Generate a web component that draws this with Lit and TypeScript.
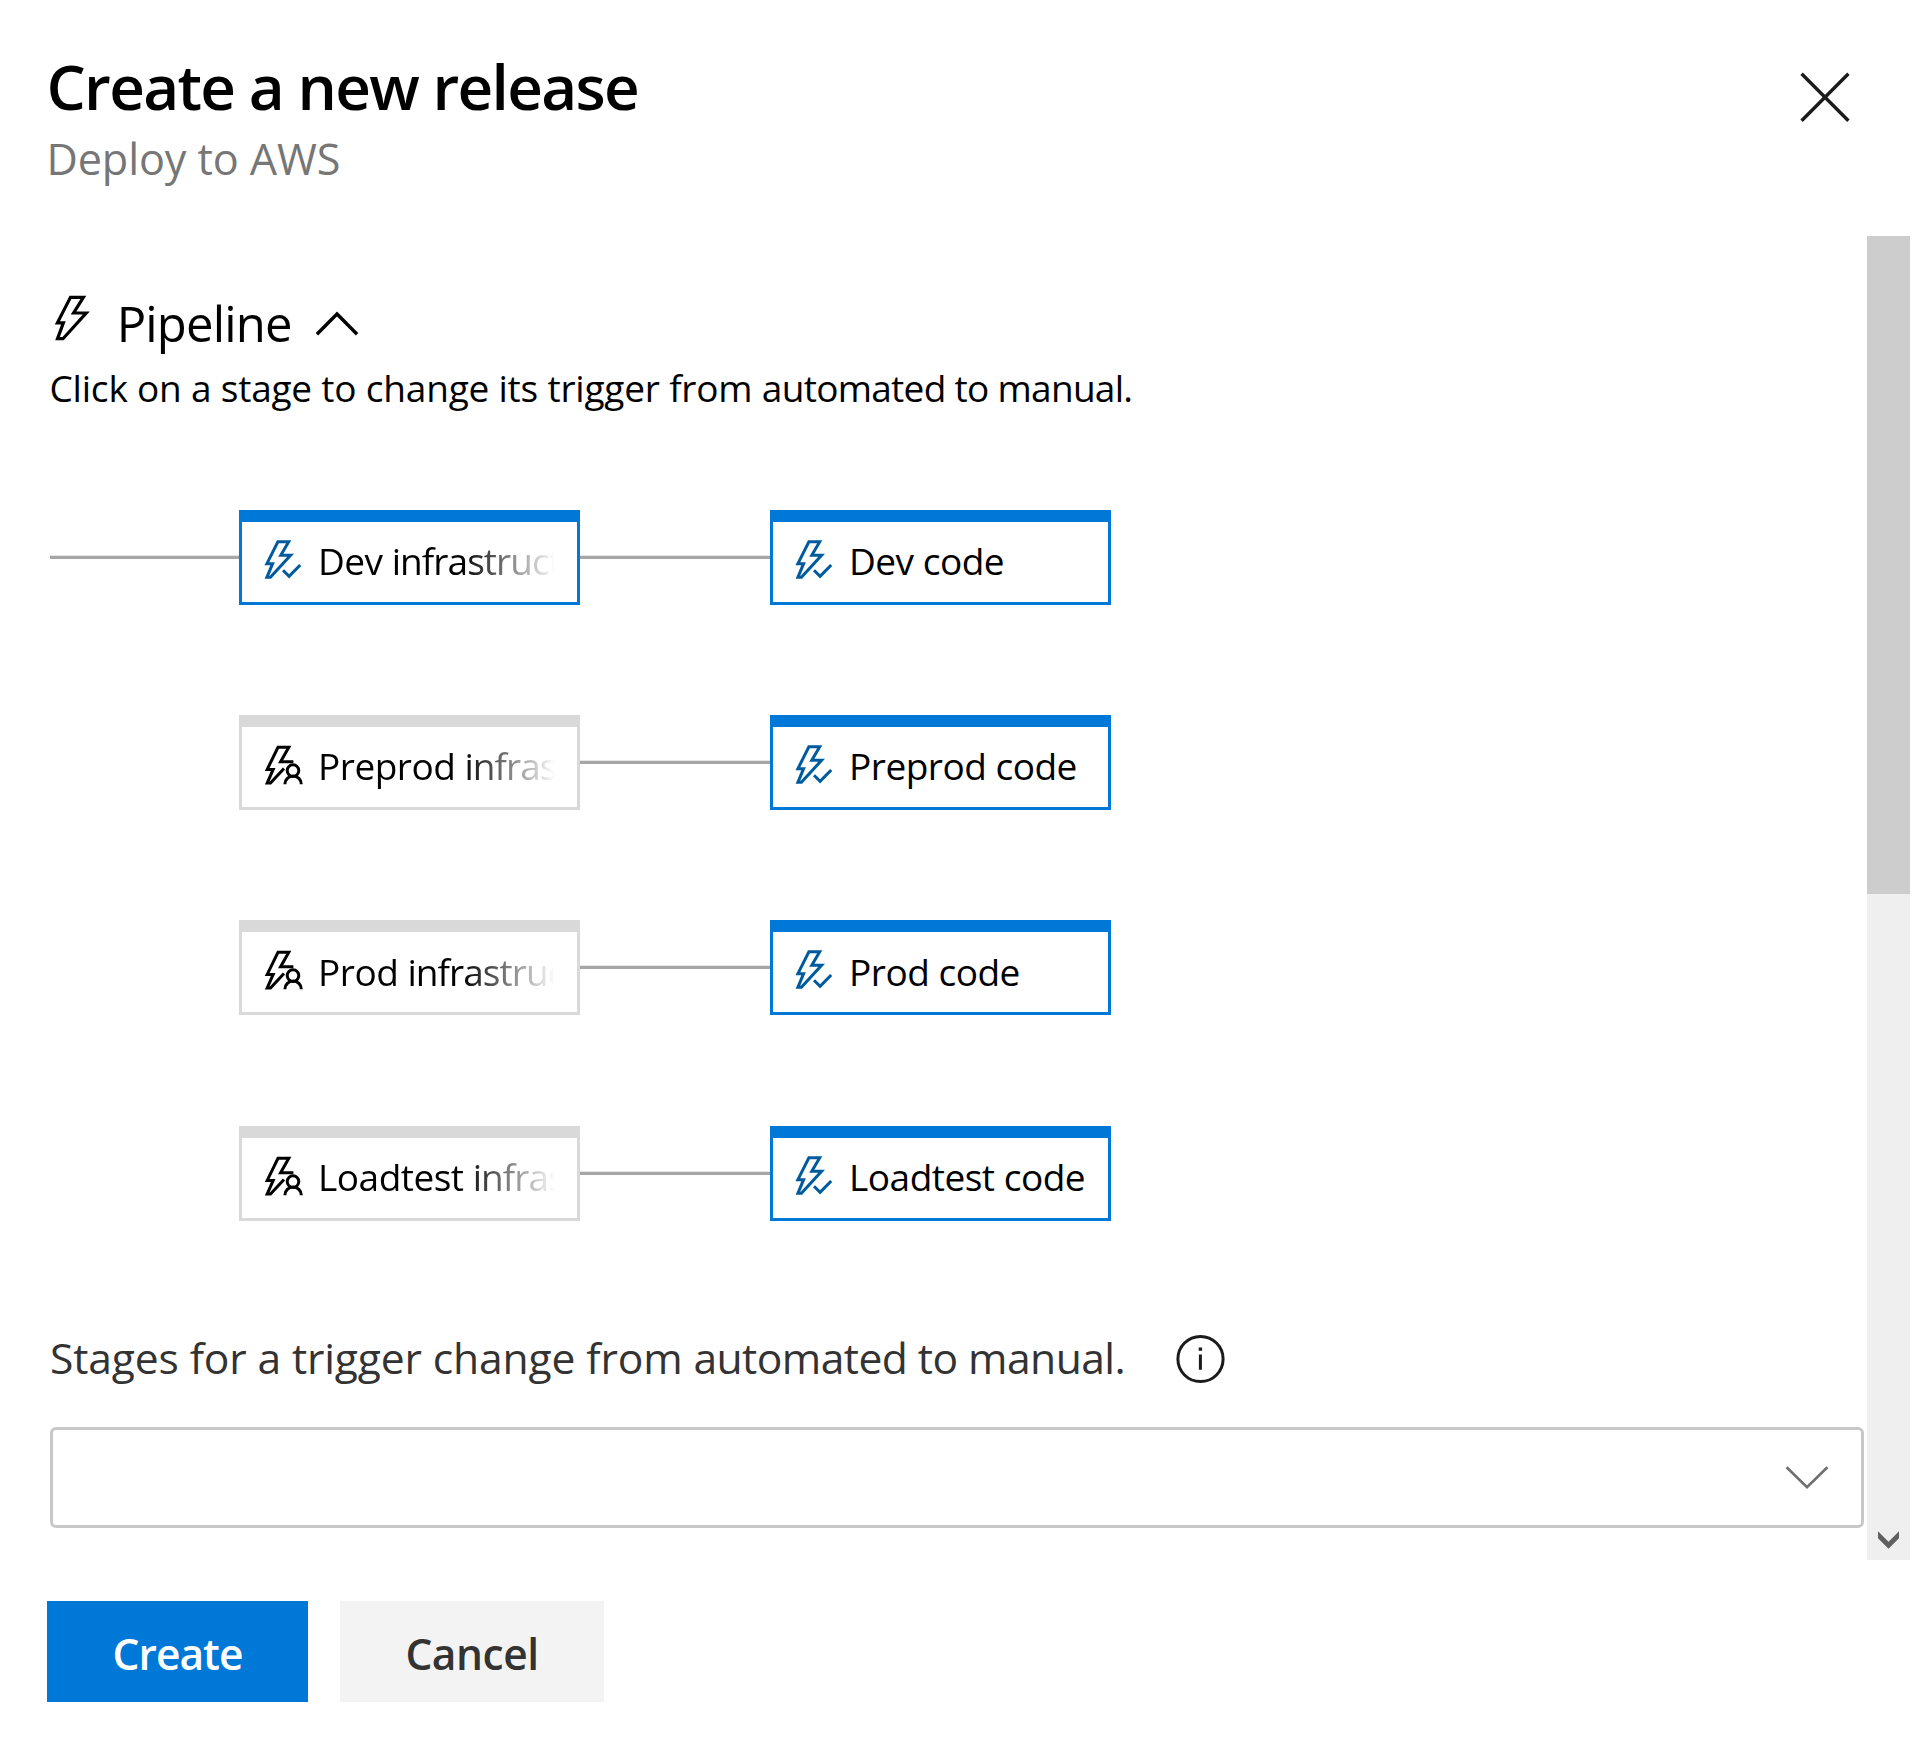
import { LitElement, html, css, svg } from "lit";
import { customElement, property } from "lit/decorators.js";
import { classMap } from "lit/directives/class-map.js";

interface Stage {
  name: string;
  kind: string;
  manual?: boolean;
}

interface PipelineRow {
  linked: boolean;
  stages: [Stage, Stage];
}

const pair = (name: string, manual: boolean): [Stage, Stage] => [
  { name, kind: "infrastructure", manual },
  { name, kind: "code" },
];

const ROWS: PipelineRow[] = [
  { linked: true, stages: pair("Dev", false) },
  { linked: false, stages: pair("Preprod", true) },
  { linked: false, stages: pair("Prod", true) },
  { linked: false, stages: pair("Loadtest", true) },
];

@customElement("stage-card")
class StageCard extends LitElement {
  @property() name = "";
  @property() kind = "";
  @property({ type: Boolean }) manual = false;

  static styles = css`
    :host {
      display: block;
      width: 341px;
      height: 94.9px;
    }
    .card {
      box-sizing: border-box;
      height: 100%;
      display: flex;
      align-items: flex-start;
      border: 3px solid #0078d7;
      border-top-width: 12px;
      background: #fff;
      padding-left: 22px;
    }
    .card.manual {
      border-color: #d9d9d9;
    }
    .icon {
      flex: none;
      width: 40px;
      height: 41px;
      margin-top: 18px;
      fill: none;
      stroke: #005a9e;
      stroke-width: 3;
    }
    .manual .icon {
      stroke: #000;
    }
    .name {
      width: 237px;
      margin: 14.4px 0 0 14px;
      overflow: hidden;
      white-space: nowrap;
      font-size: 37px;
      line-height: 50px;
      letter-spacing: -0.5px;
      color: #000;
    }
    .name.fade {
      -webkit-mask-image: linear-gradient(to right, #000 61%, transparent 100%);
      mask-image: linear-gradient(to right, #000 61%, transparent 100%);
    }
    .fade .kind {
      letter-spacing: -0.95px;
    }
  `;

  render() {
    const glyph = this.manual
      ? svg`<path d="M29.4 16.7H16.6L24.8 2.3H14L3.2 24.4H9.2L3.2 38H6.5L20 23.4"/>
            <circle cx="29" cy="25.6" r="5.8"/>
            <path d="M20.9 39.2A8.2 8.2 0 0 1 37.3 39.2"/>`
      : svg`<path d="M13.9 1.8H24.7L16.8 15.3H26.6L6.4 37.3H2.9L8.6 23.7H2.9Z"/>
            <path d="M19 30.2L25.1 36.3L36.2 25"/>`;
    const fade = this.kind === "infrastructure";
    return html`
      <div class=${classMap({ card: true, manual: this.manual })}>
        <svg class="icon" viewBox="0 0 40 41">${glyph}</svg>
        <div class=${classMap({ name: true, fade })}>${this.name} <span class="kind">${this.kind}</span></div>
      </div>
    `;
  }
}

@customElement("app-root")
class AppRoot extends LitElement {
  static styles = css`
    :host {
      display: flex;
      flex-direction: column;
      box-sizing: border-box;
      width: 1931px;
      height: 1742px;
      overflow: hidden;
      background: #fff;
      color: #000;
      font-family: "Open Sans", "Noto Sans", sans-serif;
    }
    svg {
      display: block;
      flex: none;
      fill: none;
    }
    .header {
      box-sizing: border-box;
      height: 236px;
      display: flex;
      justify-content: space-between;
      align-items: flex-start;
      padding: 46px 81px 0 46.5px;
    }
    .title {
      margin: 0;
      font-size: 62px;
      font-weight: 600;
      line-height: 80px;
      letter-spacing: -1.69px;
    }
    .subtitle {
      margin-top: 3px;
      font-size: 43.2px;
      line-height: 60px;
      letter-spacing: -0.11px;
      color: #767676;
    }
    .close {
      width: 50px;
      height: 50px;
      margin-top: 26px;
      stroke: #1b1b1b;
      stroke-width: 3.4;
    }
    .body {
      height: 1324px;
      display: flex;
    }
    .content {
      box-sizing: border-box;
      width: 1867px;
      padding: 57px 3px 0 50px;
    }
    .section {
      display: flex;
      align-items: flex-start;
      height: 60px;
    }
    .bolt {
      width: 37px;
      height: 47px;
      margin: 2px 25.7px 0 4px;
      stroke: #000;
      stroke-width: 3.2;
    }
    .section-name {
      width: 198px;
      font-size: 49px;
      line-height: 60px;
      letter-spacing: -0.83px;
    }
    .collapse {
      width: 44px;
      height: 26px;
      margin-top: 18px;
      stroke: #000;
      stroke-width: 3.4;
    }
    .hint {
      margin: 9.5px 0 0 -0.5px;
      font-size: 37px;
      line-height: 50px;
      letter-spacing: -0.206px;
      white-space: nowrap;
    }
    .hint-end {
      letter-spacing: -0.7px;
    }
    .rows {
      display: flex;
      flex-direction: column;
      gap: 110.43px;
      margin-top: 97.2px;
    }
    .row {
      display: grid;
      grid-template-columns: 189px 341px 190px 341px;
      align-items: center;
    }
    .link {
      height: 3px;
      background: #a6a6a6;
      box-shadow: 0 -1px #e6e6e6;
    }
    .field {
      display: flex;
      align-items: flex-start;
      height: 60px;
      margin-top: 106.4px;
    }
    .label {
      width: 1125px;
      font-size: 42.6px;
      line-height: 60px;
      letter-spacing: -0.14px;
      white-space: nowrap;
      color: #333;
    }
    .label-end {
      letter-spacing: -0.55px;
    }
    .info {
      width: 50px;
      height: 50px;
      margin-top: 7px;
    }
    .select {
      box-sizing: border-box;
      height: 101px;
      margin-top: 40px;
      display: flex;
      justify-content: flex-end;
      align-items: flex-start;
      border: 3px solid #c8c8c8;
      border-radius: 6px;
      padding: 35px 32px 0 0;
    }
    .caret {
      width: 44px;
      height: 26px;
      stroke: #707070;
      stroke-width: 2.7;
    }
    .scrollbar {
      width: 43px;
      display: flex;
      flex-direction: column;
      justify-content: space-between;
      align-items: center;
      background: #efefef;
    }
    .thumb {
      width: 43px;
      height: 658px;
      background: #cdcdcd;
    }
    .arrow {
      width: 21px;
      height: 18px;
      margin-bottom: 11px;
      fill: #606060;
    }
    .footer {
      display: flex;
      gap: 32px;
      padding: 41px 0 0 47px;
    }
    .button {
      box-sizing: border-box;
      height: 101px;
      border: 0;
      padding: 5px 0 0;
      font: 600 42.5px/60px "Open Sans", "Noto Sans", sans-serif;
      text-align: center;
    }
    .primary {
      width: 261px;
      background: #0078d7;
      color: #fff;
      letter-spacing: -0.97px;
    }
    .secondary {
      width: 264px;
      background: #f3f3f3;
      color: #333;
      letter-spacing: -0.47px;
    }
  `;

  render() {
    return html`
      <div class="header">
        <div>
          <h1 class="title">Create a new release</h1>
          <div class="subtitle">Deploy to AWS</div>
        </div>
        <svg class="close" viewBox="0 0 50 50"><path d="M1.6 1.8L48.4 48.8M48.4 1.8L1.6 48.8"/></svg>
      </div>
      <div class="body">
        <div class="content">
          <div class="section">
            <svg class="bolt" viewBox="0 0 37 47">
              <path d="M16.5 2.3H29.4L19.6 18H32.2L9 43.7H3.5L9.4 27.8H3.4Z"/>
            </svg>
            <div class="section-name">Pipeline</div>
            <svg class="collapse" viewBox="0 0 44 26"><path d="M1.9 23.2L22 3L42.1 23.2"/></svg>
          </div>
          <div class="hint">Click on a stage to change its trigger from <span class="hint-end">automated to manual.</span></div>
          <div class="rows">
            ${ROWS.map(
              ({ linked, stages: [infra, code] }) => html`
                <div class="row">
                  <div class=${linked ? "link" : ""}></div>
                  <stage-card .name=${infra.name} .kind=${infra.kind} ?manual=${infra.manual}></stage-card>
                  <div class="link"></div>
                  <stage-card .name=${code.name} .kind=${code.kind} ?manual=${code.manual}></stage-card>
                </div>
              `,
            )}
          </div>
          <div class="field">
            <div class="label">Stages for a trigger change from <span class="label-end">automated to manual.</span></div>
            <svg class="info" viewBox="0 0 50 50">
              <circle cx="25.5" cy="25" r="22.6" stroke="#1b1b1b" stroke-width="3"/>
              <path d="M23.9 20.5h3v15.3h-3zM23.7 13.4h3.4v3.4h-3.4z" fill="#1b1b1b"/>
            </svg>
          </div>
          <div class="select">
            <svg class="caret" viewBox="0 0 44 26"><path d="M1.6 2.2L22 22.2L42.4 2.2"/></svg>
          </div>
        </div>
        <div class="scrollbar">
          <div class="thumb"></div>
          <svg class="arrow" viewBox="0 0 21 18"><path d="M0 0.3L10.5 10.7L21 0.3V7.3L10.5 17.7L0 7.3Z"/></svg>
        </div>
      </div>
      <div class="footer">
        <button class="button primary">Create</button>
        <button class="button secondary">Cancel</button>
      </div>
    `;
  }
}
